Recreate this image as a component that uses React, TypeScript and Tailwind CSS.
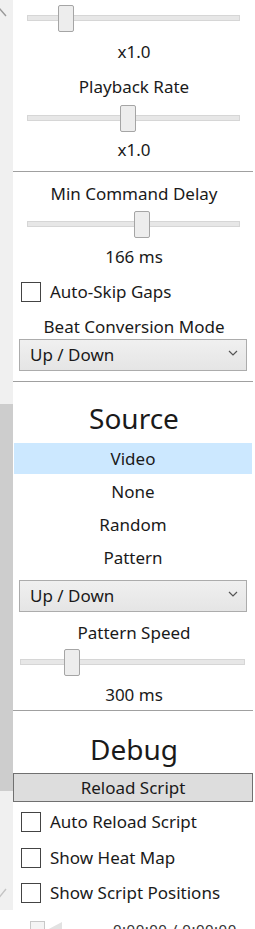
import React from 'react'

// slider: track across the row, thumb sits on top of it
function Slider({ wrap, thumb }: { wrap: string; thumb: string }) {
  return (
    <div className={`relative h-[27px] flex items-center ${wrap}`}>
      <div className="absolute inset-x-0 top-[10px] h-[6px] bg-[#e7e7e7] border border-[#d6d6d6]" />
      <div className={`relative h-[27px] w-[16px] bg-[#ededed] border border-[#a5a5a5] rounded-[2px] ${thumb}`} />
    </div>
  )
}

function Label({ text, className = '' }: { text: string; className?: string }) {
  return <div className={`h-[20px] leading-[20px] text-center ${className}`}>{text}</div>
}

function Check({ text, className = '' }: { text: string; className?: string }) {
  return (
    <div className={`flex items-center h-[20px] ${className}`}>
      <div className="ml-[8px] w-[20px] h-[20px] shrink-0 border border-[#444] bg-white" />
      <span className="ml-[9px] leading-[20px] whitespace-nowrap">{text}</span>
    </div>
  )
}

function Dropdown({ className = '' }: { className?: string }) {
  return (
    <div
      className={`ml-[6px] w-[228px] h-[32px] flex items-center justify-between pl-[10px] pr-[8px] border border-[#acacac] bg-gradient-to-b from-[#f0f0f0] to-[#e5e5e5] ${className}`}
    >
      <span className="leading-[20px]">Up / Down</span>
      <svg width="10" height="6" viewBox="0 0 10 6" className="-mt-[4px]">
        <polyline points="1,1 5,5 9,1" fill="none" stroke="#555" strokeWidth="1.2" />
      </svg>
    </div>
  )
}

function Rule({ className = '' }: { className?: string }) {
  return <div className={`h-px w-[240px] bg-[#a0a0a0] ${className}`} />
}

const sources = ['Video', 'None', 'Random', 'Pattern']

export default function App() {
  return (
    <div className="w-[255px] h-[929px] overflow-hidden bg-white text-[#1a1a1a] text-[17px] font-['Noto_Sans',sans-serif]">
      <div className="flex h-[910px]">
        {/* scrollbar */}
        <div className="w-[13px] shrink-0 bg-[#f0f0f0] flex flex-col">
          <svg width="13" height="20" viewBox="0 0 13 20" className="shrink-0">
            <polyline points="-7,16 -0.5,8.5 6,16" fill="none" stroke="#9a9a9a" strokeWidth="1.4" />
          </svg>
          <div className="h-[384px] shrink-0" />
          <div className="h-[387px] shrink-0 bg-[#cdcdcd]" />
          <div className="flex-1" />
          <svg width="13" height="20" viewBox="0 0 13 20" className="shrink-0 mb-[5px]">
            <polyline points="-7,4 -0.5,12 6,4" fill="none" stroke="#c4c4c4" strokeWidth="1.4" />
          </svg>
        </div>

        {/* panel */}
        <div className="flex-1 flex flex-col">
          <Slider wrap="mt-[5px] ml-[14px] mr-[15px]" thumb="ml-[31px]" />
          <Label text="x1.0" className="mt-[10px]" />
          <Label text="Playback Rate" className="mt-[15px]" />
          <Slider wrap="mt-[8px] ml-[14px] mr-[15px]" thumb="ml-[93px]" />
          <Label text="x1.0" className="mt-[8px]" />
          <Rule className="mt-[11px]" />

          <Label text="Min Command Delay" className="mt-[12px]" />
          <Slider wrap="mt-[7px] ml-[14px] mr-[15px]" thumb="ml-[107px]" />
          <Label text="166 ms" className="mt-[9px]" />
          <Check text="Auto-Skip Gaps" className="mt-[15px]" />
          <Label text="Beat Conversion Mode" className="mt-[15px]" />
          <Dropdown className="mt-[2px]" />
          <Rule className="mt-[10px]" />

          <div className="mt-[18px] h-[36px] leading-[36px] text-center text-[28px]">Source</div>
          <div className="mt-[7px] flex flex-col">
            {sources.map((s, i) => (
              <div
                key={s}
                className={`ml-px w-[238px] h-[33px] leading-[31px] text-center border-b-2 border-transparent bg-clip-padding ${
                  i === 0 ? 'bg-[#cce8ff]' : ''
                }`}
              >
                {s}
              </div>
            ))}
          </div>
          <Dropdown className="mt-[5px]" />
          <Label text="Pattern Speed" className="mt-[11px]" />
          <Slider wrap="mt-[6px] ml-[7px] mr-[10px]" thumb="ml-[44px]" />
          <Label text="300 ms" className="mt-[9px]" />
          <Rule className="mt-[5px]" />

          <div className="mt-[20px] h-[36px] leading-[36px] text-center text-[28px]">Debug</div>
          <button className="mt-[6px] w-[240px] h-[29px] leading-[27px] text-center bg-[#dddddd] border border-[#707070]">
            Reload Script
          </button>
          <Check text="Auto Reload Script" className="mt-[10px]" />
          <Check text="Show Heat Map" className="mt-[16px]" />
          <Check text="Show Script Positions" className="mt-[15px]" />
        </div>
      </div>

      {/* player bar, cut off at the bottom */}
      <div className="h-[19px] flex items-start overflow-hidden">
        <div className="ml-[30px] mt-[11px] w-[15px] h-[15px] border border-[#c8c8c8] bg-[#f4f4f4]" />
        <svg width="17" height="10" viewBox="0 0 17 10" className="mt-[12px]">
          <polygon points="0,9 17,0 17,9" fill="#e2e2e2" />
        </svg>
        <div className="ml-[51px] mt-[9px] leading-[20px] text-[15px] text-[#333] tracking-[0.5px]">0:00:00 / 0:00:00</div>
      </div>
    </div>
  )
}
